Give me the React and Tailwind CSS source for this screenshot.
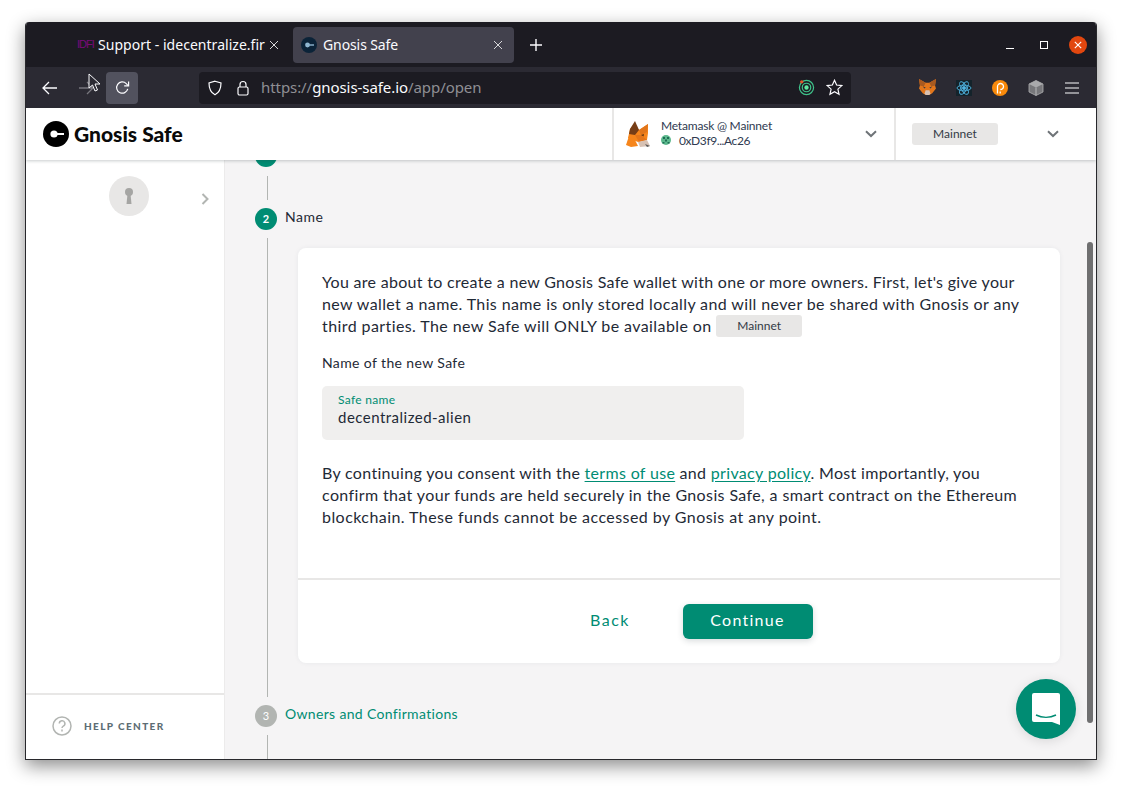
import React from "react";

const Fox = ({ className }) => (
  <svg viewBox="0 0 24 26" className={className}>
    <polygon points="2,17 4,8 8,3 13,9 22,3 22,12 21,19 12,21" fill="#f6851b" />
    <polygon points="4,8 9,0 13,9 9,14 3,13" fill="#763d16" />
    <polygon points="13,9 22,3 21,11 15,14" fill="#e2761b" />
    <polygon points="9,14 15,14 21,19 13,21" fill="#e4761b" />
    <polygon points="0,24 3,15 9,19 12,25 5,26" fill="#f6851b" />
    <polygon points="12,21 21,19 24,25 14,26" fill="#d7c1b3" />
    <polygon points="19,23 24,25 21,26" fill="#5a5a5a" />
    <polygon points="15,14 18,13 17.500,15.500" fill="#5c3314" />
  </svg>
);

const ToolbarFox = () => (
  <svg viewBox="0 0 18 18" className="w-[17px] h-[17px]">
    <polygon points="0,0 7,4 11,4 18,0 17,7 18,10 14,15 11,17 7,17 4,15 0,10 1,7" fill="#e2761b" />
    <polygon points="0,0 7,4 5,8 1,7" fill="#a85a20" />
    <polygon points="18,0 11,4 13,8 17,7" fill="#a85a20" />
    <polygon points="7,12 11,12 12,15 11,17 7,17 6,15" fill="#d7c1b3" />
    <polygon points="4,8 7,9 6,10" fill="#233447" />
    <polygon points="14,8 11,9 12,10" fill="#233447" />
  </svg>
);

const Chevron = () => (
  <svg viewBox="0 0 12 8" className="w-[12px] h-[8px]" fill="none" stroke="#6f7478" strokeWidth="2">
    <path d="M1 1.200 6 6 11 1.200" />
  </svg>
);

const Mainnet = ({ className }) => (
  <span className={`inline-flex items-center justify-center bg-[#e8e7e6] rounded-[3px] text-[12px] text-[#333a45] ${className}`}>
    Mainnet
  </span>
);

const CloseX = ({ color }) => (
  <svg viewBox="0 0 10 10" className="w-[10px] h-[10px]" fill="none" stroke={color} strokeWidth="1">
    <path d="M1 1 9 9M9 1 1 9" />
  </svg>
);

const TabBar = () => (
  <div className="h-[45px] shrink-0 bg-[#1c1b22] flex items-center pl-[49px] font-['Noto_Sans',sans-serif] text-[14px]">
    <div className="w-[210px] h-[36px] flex items-center pl-[2px] text-[#fbfbfe]">
      <span className="w-[18px] text-[11px] leading-none text-[#7a0a7a] tracking-[-1px] font-['Liberation_Sans',sans-serif]">IDFI</span>
      <span className="ml-[3px] w-[168px] whitespace-nowrap overflow-hidden tracking-[0.03px]">Support - idecentralize.fir</span>
      <span className="ml-[3px]"><CloseX color="#d8d8da" /></span>
    </div>
    <div className="ml-[8px] w-[221px] h-[36px] rounded-[4px] bg-[#42414d] flex items-center pl-[8px] pr-[11px] text-[#fbfbfe]">
      <svg viewBox="0 0 16 16" className="w-[16px] h-[16px]">
        <circle cx="8" cy="8" r="8" fill="#0b2338" />
        <circle cx="6.500" cy="8" r="2.400" fill="#8fb6d0" />
        <rect x="8" y="7.300" width="5" height="1.400" fill="#8fb6d0" />
      </svg>
      <span className="ml-[6px] flex-1 tracking-[-0.1px]">Gnosis Safe</span>
      <CloseX color="#d8d8da" />
    </div>
    <svg viewBox="0 0 12 12" className="ml-[16px] w-[12px] h-[12px]" fill="none" stroke="#fbfbfe" strokeWidth="1.400">
      <path d="M6 0v12M0 6h12" />
    </svg>
    <div className="ml-auto flex items-center pr-[9px]">
      <span className="w-[8px] h-[1px] bg-white mt-[8px]" />
      <span className="ml-[26px] w-[8px] h-[8px] border border-white" />
      <span className="ml-[21px] w-[18px] h-[18px] rounded-full bg-[#e2470f] flex items-center justify-center">
        <svg viewBox="0 0 10 10" className="w-[8px] h-[8px]" fill="none" stroke="#fff" strokeWidth="1.400">
          <path d="M1 1 9 9M9 1 1 9" />
        </svg>
      </span>
    </div>
  </div>
);

const ToolBar = () => (
  <div className="h-[41px] shrink-0 bg-[#2b2a33] flex items-center pl-[16px] relative">
    <svg viewBox="0 0 16 14" className="w-[16px] h-[14px]" fill="none" stroke="#fbfbfe" strokeWidth="1.300">
      <path d="M15 7H1M7 1 1 7l6 6" />
    </svg>
    <svg viewBox="0 0 16 14" className="ml-[20px] w-[16px] h-[14px]" fill="none" stroke="#77767d" strokeWidth="1.300">
      <path d="M1 7h14M9 1l6 6-6 6" />
    </svg>
    <div className="ml-[12px] w-[32px] h-[32px] rounded-[4px] bg-[#52525e] flex items-center justify-center">
      <svg viewBox="0 0 16 16" className="w-[15px] h-[15px]" fill="none" stroke="#fbfbfe" strokeWidth="1.300">
        <path d="M13.600 9.500A6 6 0 1 1 12 3.800L14 6" />
        <path d="M14.500 1.500V6.200H9.800" />
      </svg>
    </div>
    <div className="ml-[61px] w-[652px] h-[32px] rounded-[4px] bg-[#1c1b22] flex items-center pl-[8px] pr-[8px]">
      <svg viewBox="0 0 16 16" className="w-[16px] h-[16px]" fill="none" stroke="#fbfbfe" strokeWidth="1.200">
        <path d="M8 1.200 14 3c0 6-1.500 9.500-6 11.800C3.500 12.500 2 9 2 3Z" />
      </svg>
      <svg viewBox="0 0 14 16" className="ml-[13px] w-[14px] h-[16px]" fill="none" stroke="#fbfbfe" strokeWidth="1.200">
        <rect x="2" y="7" width="10" height="8" rx="1.500" />
        <path d="M4 7V4.500a3 3 0 0 1 6 0V7" />
      </svg>
      <span className="ml-[11px] text-[15px] font-['Noto_Sans',sans-serif] tracking-[-0.07px] text-[#8f8f94]">
        https://<span className="text-[#fbfbfe]">gnosis-safe.io</span>/app/open
      </span>
      <svg viewBox="0 0 18 18" className="ml-auto w-[17px] h-[17px]" fill="none">
        <circle cx="9" cy="9" r="7.500" stroke="#3fc28a" strokeWidth="1.300" />
        <circle cx="9" cy="9" r="4.500" stroke="#3fc28a" strokeWidth="1.300" />
        <circle cx="9" cy="9" r="2.300" fill="#5ee8a0" />
        <circle cx="4" cy="3" r="1.800" fill="#e2572b" />
      </svg>
      <svg viewBox="0 0 16 16" className="ml-[11px] w-[17px] h-[17px]" fill="none" stroke="#fbfbfe" strokeWidth="1.100">
        <path d="M8 1.200 10 5.700 14.900 6.200 11.200 9.500 12.300 14.400 8 11.900 3.700 14.400 4.800 9.500 1.100 6.200 6 5.700Z" />
      </svg>
    </div>
    <div className="ml-[68px] flex items-center">
      <ToolbarFox />
      <span className="ml-[20px] w-[16px] h-[16px] bg-[#14232b] flex items-center justify-center">
        <svg viewBox="0 0 16 16" className="w-[16px] h-[16px]" fill="none" stroke="#4fb3e0" strokeWidth="0.900">
          <ellipse cx="8" cy="8" rx="7" ry="2.800" />
          <ellipse cx="8" cy="8" rx="7" ry="2.800" transform="rotate(60 8 8)" />
          <ellipse cx="8" cy="8" rx="7" ry="2.800" transform="rotate(120 8 8)" />
          <circle cx="8" cy="8" r="1.500" fill="#4fb3e0" />
        </svg>
      </span>
      <span className="ml-[20px] w-[16px] h-[16px] rounded-full bg-[#f98a0b] flex items-center justify-center">
        <svg viewBox="0 0 14 14" className="w-[14px] h-[14px]" fill="none" stroke="#fff" strokeWidth="1.300">
          <path d="M4.500 12.500V5.500a3 3 0 1 1 2.800 3" />
          <path d="M7.200 12.500V10.500" />
        </svg>
      </span>
      <svg viewBox="0 0 16 16" className="ml-[20px] w-[16px] h-[16px]">
        <polygon points="8,0.500 15,4 15,12 8,15.500 1,12 1,4" fill="#77777b" stroke="#b0b0b3" strokeWidth="0.800" />
        <polygon points="8,0.500 15,4 8,7.500 1,4" fill="#a9a9ac" />
        <path d="M8 7.500v8" stroke="#c8c8ca" strokeWidth="0.800" />
      </svg>
      <svg viewBox="0 0 14 12" className="ml-[21px] w-[14px] h-[12px]" stroke="#fbfbfe" strokeWidth="1.200">
        <path d="M0 1h14M0 6h14M0 11h14" />
      </svg>
    </div>
  </div>
);

const Identicon = () => (
  <svg viewBox="0 0 10 10" className="w-[10px] h-[10px]">
    <circle cx="5" cy="5" r="5" fill="#5cb98d" />
    <path d="M2 2h2v2H2ZM6 2h2v2H6ZM4 4.500h2v2H4ZM1.500 7h2v1.500h-2ZM6.500 7h2v1.500h-2Z" fill="#1f6d55" />
  </svg>
);

const Header = () => (
  <div className="h-[52px] shrink-0 bg-white flex relative z-10 shadow-[0_1px_3px_rgba(40,54,61,0.25)] font-['Lato',sans-serif]">
    <div className="w-[586px] flex items-center pl-[17px]">
      <svg viewBox="0 0 26 26" className="w-[26px] h-[26px]">
        <circle cx="13" cy="13" r="13" fill="#000" />
        <circle cx="11" cy="13" r="3.600" fill="#fff" />
        <rect x="13" y="12" width="8" height="2" fill="#fff" />
      </svg>
      <span className="ml-[5px] -mt-[1px] text-[21px] font-black text-[#0a0a0a]">Gnosis Safe</span>
    </div>
    <div className="w-[282px] border-l-2 border-[#e8e7e6] flex items-center pl-[12px]">
      <Fox className="w-[24px] h-[26px]" />
      <div className="ml-[11px] -mt-[3px] text-[12px] leading-[15px] text-[#2f3a50]">
        <div className="tracking-[-0.2px]">Metamask @ Mainnet</div>
        <div className="flex items-center">
          <Identicon />
          <span className="ml-[8px] tracking-[-0.4px]">0xD3f9...Ac26</span>
        </div>
      </div>
      <span className="ml-auto mr-[17px]"><Chevron /></span>
    </div>
    <div className="flex-1 border-l-2 border-[#e8e7e6] flex items-center pl-[16px]">
      <Mainnet className="w-[86px] h-[22px] -mt-[1px]" />
      <span className="ml-[49px]"><Chevron /></span>
    </div>
  </div>
);

const Sidebar = () => (
  <div className="w-[199px] shrink-0 bg-white flex flex-col border-r border-[#ecebeb]">
    <div className="flex-1 relative pt-[16px]">
      <div className="flex items-start">
        <div className="ml-[83px] w-[40px] h-[40px] rounded-full bg-[#e8e7e6] flex items-center justify-center">
          <svg viewBox="0 0 12 18" className="w-[12px] h-[18px]" fill="#a5a5a3">
            <circle cx="6" cy="5" r="4" />
            <path d="M4.500 7h3l1 10h-5Z" />
          </svg>
        </div>
        <svg viewBox="0 0 8 12" className="ml-[52px] mt-[17px] w-[8px] h-[12px]" fill="none" stroke="#b2b5b2" strokeWidth="2">
          <path d="M1.500 1 6.500 6 1.500 11" />
        </svg>
      </div>
    </div>
    <div className="h-[66px] border-t-2 border-[#e8e7e6] flex items-center pl-[26px] pb-[2px]">
      <svg viewBox="0 0 20 20" className="w-[20px] h-[20px]" fill="none" stroke="#b2b5b2" strokeWidth="1.500">
        <circle cx="10" cy="10" r="9" />
        <path d="M7.300 7.600a2.800 2.800 0 1 1 4 2.500c-.9.500-1.300 1-1.300 2" />
        <path d="M10 13.600v1.800" />
      </svg>
      <span className="ml-[12px] text-[10px] font-black tracking-[1.380px] text-[#5d6d74]">HELP CENTER</span>
    </div>
  </div>
);

const Link = ({ children }) => (
  <span className="text-[#008c73] underline underline-offset-2">{children}</span>
);

const StepCard = () => (
  <div className="w-[762px] h-[415px] mt-[10px] bg-white rounded-[8px] shadow-[0_0_5px_rgba(40,54,61,0.06)] flex flex-col">
    <div className="flex-1 px-[24px] pt-[23px] text-[16px] leading-[22px] text-[#1f2a36] tracking-[0.38px]">
      <p>
        <span className="tracking-[0.3px]">You are about to create a new Gnosis Safe wallet with one or more owners. First, let's give your</span>
        <br />
        new wallet a name. This name is only stored locally and will never be shared with Gnosis or any
        <br />
        <span className="tracking-[0.41px]">third parties. The new Safe will ONLY be available on</span>{" "}
        <Mainnet className="w-[86px] h-[22px] align-top tracking-normal" />
      </p>
      <p className="mt-[15px] text-[14px] tracking-[0.38px]">Name of the new Safe</p>
      <div className="mt-[12px] w-[422px] h-[54px] rounded-[5px] bg-[#f0efee] pl-[16px] pt-[7px]">
        <div className="text-[12px] leading-[14px] text-[#008c73] tracking-[0.3px]">Safe name</div>
        <div className="text-[15px] leading-[20px] tracking-[0.48px]">decentralized-alien</div>
      </div>
      <p className="mt-[22px]">
        <span className="tracking-[0.32px]">
          By continuing you consent with the <Link>terms of use</Link> and <Link>privacy policy</Link>. Most importantly, you
        </span>
        <br />
        confirm that your funds are held securely in the Gnosis Safe, a smart contract on the Ethereum
        <br />
        <span className="tracking-[0.44px]">blockchain. These funds cannot be accessed by Gnosis at any point.</span>
      </p>
    </div>
    <div className="h-[85px] shrink-0 border-t-2 border-[#e8e7e6] flex items-center justify-center pl-[17px]">
      <button className="w-[93px] h-[35px] pb-[3px] pl-[2px] text-[16px] tracking-[1.500px] text-[#008c73]">Back</button>
      <button className="ml-[27px] w-[130px] h-[35px] pb-[3px] rounded-[6px] bg-[#008c73] text-white text-[16px] tracking-[1.250px] shadow-[0_2px_6px_rgba(40,54,61,0.18)]">
        Continue
      </button>
    </div>
  </div>
);

const Main = () => (
  <div className="flex-1 min-w-0 bg-[#f5f4f5] overflow-hidden pl-[30px] text-[#1f2a36]">
    <div className="w-[22px] h-[22px] -mt-[15px] rounded-full bg-[#008c73]" />
    <div className="ml-[12px] mt-[9px] w-[1px] h-[24px] bg-[#b2b5b2]" />
    <div className="mt-[8px] flex items-start">
      <span className="w-[22px] h-[22px] rounded-full bg-[#008c73] text-white text-[11px] font-bold flex items-center justify-center">2</span>
      <span className="ml-[8px] -mt-[1px] text-[14px] leading-[20px] tracking-[0.5px]">Name</span>
    </div>
    <div className="mt-[8px] h-[459px] flex items-start">
      <div className="ml-[12px] w-[1px] h-full bg-[#b2b5b2]" />
      <div className="ml-[30px]"><StepCard /></div>
    </div>
    <div className="mt-[8px] flex items-start">
      <span className="w-[22px] h-[22px] rounded-full bg-[#b2b5b2] text-white text-[11px] flex items-center justify-center">3</span>
      <span className="ml-[8px] -mt-[1px] text-[14px] leading-[20px] tracking-[0.33px] text-[#008c73]">Owners and Confirmations</span>
    </div>
    <div className="ml-[12px] mt-[8px] w-[1px] h-[30px] bg-[#b2b5b2]" />
  </div>
);

export default function App() {
  return (
    <div className="w-[1122px] h-[788px] bg-white pt-[22px] pl-[25px] overflow-hidden relative font-['Lato',sans-serif]">
      <div className="w-[1072px] h-[738px] flex flex-col rounded-t-[4px] overflow-hidden relative border-x border-b border-[#28282c] shadow-[0_6px_18px_rgba(0,0,0,0.45)]">
        <TabBar />
        <ToolBar />
        <Header />
        <div className="flex-1 min-h-0 flex">
          <Sidebar />
          <Main />
        </div>
        {/* scrollbar thumb */}
        <div className="absolute left-[1061px] top-[220px] w-[6px] h-[481px] rounded-[3px] bg-[#6f6f70]" />
        {/* chat launcher */}
        <div className="absolute left-[990px] top-[657px] w-[60px] h-[60px] rounded-full bg-[#008c73] flex items-center justify-center shadow-[0_2px_12px_rgba(0,0,0,0.12)]">
          <svg viewBox="0 0 28 32" className="w-[28px] h-[32px]">
            <path d="M2 0h24a2 2 0 0 1 2 2v30l-8-3H2a2 2 0 0 1-2-2V2a2 2 0 0 1 2-2Z" fill="#fff" />
            <path d="M4 22c6 3 14 3 20 0" fill="none" stroke="#008c73" strokeWidth="1.500" />
          </svg>
        </div>
      </div>
      {/* mouse pointer from the capture */}
      <svg viewBox="0 0 14 20" className="absolute left-[88px] top-[73px] w-[14px] h-[20px]">
        <path d="M1 1v14l3.500-3 2.500 6 2.500-1-2.500-6h5Z" fill="#2b2a33" stroke="#fbfbfe" strokeWidth="1" />
      </svg>
    </div>
  );
}
